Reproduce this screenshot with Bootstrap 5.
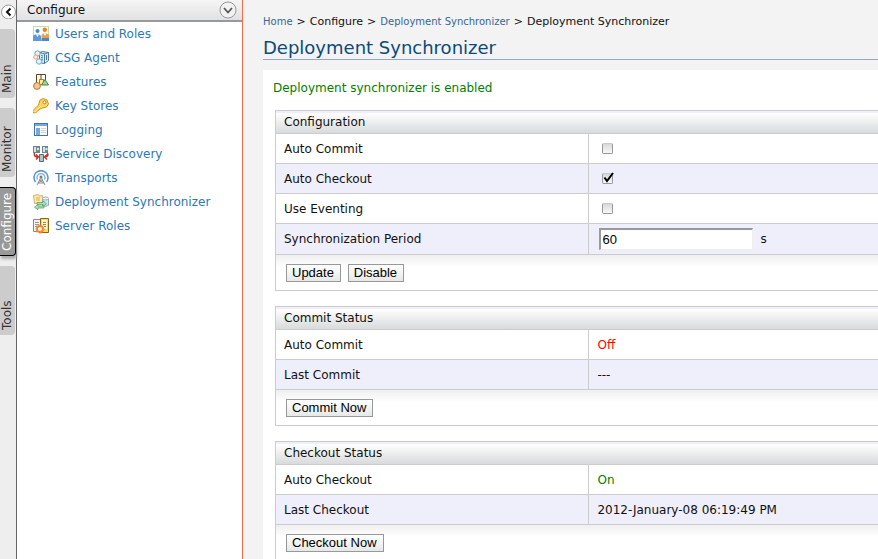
<!DOCTYPE html>
<html lang="en">
<head>
<meta charset="utf-8">
<meta name="viewport" content="width=device-width, initial-scale=1">
<title>Deployment Synchronizer</title>
<link href="https://cdn.jsdelivr.net/npm/bootstrap@5.3.0/dist/css/bootstrap.min.css" rel="stylesheet">
<style>
  body { font-family: "DejaVu Sans", Verdana, sans-serif; font-size: 12px; line-height: 16px; color: #111; background: #f3f3f3; }
  a { text-decoration: none; }
  .tab-strip { width: 17px; background: #eee; border-right: 1px solid #666; gap: 10px; }
  .collapse-btn { width: 17px; height: 19px; }
  .side-tab { width: 15px; height: 69px; padding: 5px 0 0; writing-mode: vertical-rl; transform: rotate(180deg); background: #ccc; color: #333; border-radius: 4px 0 0 4px; line-height: 15px; text-align: left; }
  .side-tab.current { width: 16px; background: #999; color: #fff; border: 1px solid #000; border-right: 0; padding-top: 4px; box-shadow: -1px -3px 3px #aaa; }
  .side-menu { width: 226px; background: #fff; border-right: 1px solid #f8694c; }
  .menu-head { height: 22px; padding: 0 5px 0 10px; background: linear-gradient(#f5f5f5, #e1e2e3); border-bottom: 2px solid #999; }
  .menu-link { height: 24px; padding-left: 16px; gap: 6px; color: #2a78b9; }
  .work-area { padding: 14px 0 0 20px; scrollbar-width: none; }
  .crumbs { font-size: 11px; height: 16px; --bs-breadcrumb-divider: ">"; }
  .crumbs a { font-size: 10px; color: #386698; }
  .crumbs .breadcrumb-item + .breadcrumb-item { padding-left: 4px; }
  .crumbs .breadcrumb-item + .breadcrumb-item::before { padding-right: 4px; color: #111; }
  .page-title { font-size: 18px; line-height: 23px; color: #0b4a7c; margin: 6px 0 10px; border-bottom: 1px solid #94a6cd; }
  .work-body { padding: 10px 0 14px 10px; }
  .status-note { color: #008000; margin-bottom: 14px; }
  .data-table { table-layout: fixed; border-collapse: separate; border-spacing: 0; margin: 0 0 15px 2px; width: calc(100% - 2px); border: 1px solid #ccc; border-right: 0; }
  .data-table th { height: 22px; padding: 0 8px 3px; font-weight: 400; border-top: 2px solid #efeefb; background: linear-gradient(#fff, #d8dadb); }
  .data-table td { height: 30px; padding: 0 8px; border-top: 1px solid #ccc; }
  .data-table td + td { border-left: 1px solid #ccc; }
  .data-table .shaded td { background: #efeefb; }
  .data-table .field-row td { height: 31px; }
  .label-col { width: 51.9%; }
  .data-table .actions td { height: 36px; padding: 0 10px; background: linear-gradient(#efefef, #fff 12px); }
  .plain-btn { font: 13px/16px "Liberation Sans", Arial, sans-serif; color: #000; padding: 0 6px 0 5px; border: 1px solid #999; background: linear-gradient(#fff, #e6e8e8); margin-right: 3px; }
  .tick { appearance: none; display: block; width: 11px; height: 11px; margin-left: 5px; border: 1px solid #999; border-top-color: #c8c8c8; border-radius: 2px; background: linear-gradient(#d8d8d8, #f8f8f8); }
  .tick-wrap { width: 24px; height: 14px; display: flex; align-items: center; position: relative; }
  .tick-mark { position: absolute; left: 5px; top: 0; pointer-events: none; display: none; }
  .tick:checked + .tick-mark { display: block; }
  .seconds { width: 154px; height: 22px; padding: 1px; margin-left: 2px; border: 2px solid #999; border-right: 1px solid #eee; border-bottom: 1px solid #eee; background: #fff; font: 13px "Liberation Sans", Arial, sans-serif; color: #000; }
  .unit { margin-left: 7px; }
  .state-off { color: #f00; }
  .state-on { color: #008000; }
</style>
<script src="https://cdn.jsdelivr.net/npm/bootstrap@5.3.0/dist/js/bootstrap.bundle.min.js"></script>
</head>
<body>
<div class="d-flex vh-100 overflow-hidden">
  <nav class="tab-strip d-flex flex-column flex-shrink-0" aria-label="Sections">
    <button class="collapse-btn border-0 bg-transparent p-0 d-flex" aria-label="Collapse menu">
      <svg width="16" height="19" viewBox="0 0 16 19"><circle cx="8.5" cy="12" r="7" fill="#fff" stroke="#999"/><path d="M10.500 8.500 7 12l3.500 3.500" fill="none" stroke="#111" stroke-width="2"/></svg>
    </button>
    <button class="side-tab border-0">Main</button>
    <button class="side-tab border-0">Monitor</button>
    <button class="side-tab current">Configure</button>
    <button class="side-tab border-0">Tools</button>
  </nav>

  <aside class="side-menu flex-shrink-0">
    <div class="menu-head d-flex align-items-center justify-content-between">
      <span>Configure</span>
      <button class="border-0 bg-transparent p-0 d-flex" aria-label="Toggle menu">
        <svg width="18" height="18" viewBox="0 0 18 18"><circle cx="9" cy="9" r="8" fill="#f2f2f2" stroke="#999"/><path d="m5 7 4 4.500L13 7" fill="none" stroke="#555" stroke-width="1.800"/></svg>
      </button>
    </div>
    <ul class="list-unstyled mb-0">
      <li><a href="#" class="menu-link d-flex align-items-center">
        <svg width="16" height="16" viewBox="0 0 16 16"><rect x=".5" y=".5" width="15" height="14" fill="#fcfff4" stroke="#c3dcae"/><circle cx="4.500" cy="5" r="2" fill="#4189d0"/><circle cx="11.800" cy="3.800" r="2.200" fill="#ef8027"/><path d="M0 15v-4q0-2.500 2.500-2.500h3Q8 8.500 8 11v4z" fill="#5c9bd8"/><path d="M8.500 12v-2q0-2.500 2.500-2.500h2q3 0 3 2.500v2z" fill="#f39a4c"/><path d="M8.500 12H16v3H8.500z" fill="#4b86c6"/><path d="M3 8.500h3L4.500 11zM10.500 7.500h3L12 10z" fill="#fff"/></svg>
        Users and Roles</a></li>
      <li><a href="#" class="menu-link d-flex align-items-center">
        <svg width="16" height="16" viewBox="0 0 16 16"><path d="m6.500 2.500 3-1 6 1v8l-4 3-5-1z" fill="#dceaf2" stroke="#477ba2"/><path d="m6.500 2.500 5 1.500 4-1.500M11.500 4v9.500M8 5.500l2 .5M8 7.500l2 .5M8 9.500l2 .5M13.500 5v5" fill="none" stroke="#477ba2"/><circle cx="4.500" cy="3.500" r="2.600" fill="#e4f5fc" stroke="#61a4cd"/><circle cx="2.800" cy="7" r="2.100" fill="#fff1df" stroke="#e79f68"/><circle cx="6" cy="11.500" r="2.700" fill="#e1f2fa" stroke="#70acd0"/></svg>
        CSG Agent</a></li>
      <li><a href="#" class="menu-link d-flex align-items-center">
        <svg width="16" height="16" viewBox="0 0 16 16"><path d="M3.500 9V.5h9V7M8 .5V6" fill="none" stroke="#6c4309"/><path d="M6.500 5.500h4v5h-4z" fill="#ffe98b" stroke="#ab7b17"/><circle cx="4" cy="12" r="3.400" fill="#f7c78f" stroke="#b87836"/><path d="m12 5.500 3.500 5.500h-7z" fill="#a2d498" stroke="#468c45"/></svg>
        Features</a></li>
      <li><a href="#" class="menu-link d-flex align-items-center">
        <svg width="16" height="16" viewBox="0 0 16 16"><path d="m7 2 3-1.500 4 1.500 1.500 4-2 3-4 1-1.500 1-1-.5-1 1.500-1.500 1-1 1-1 1-3-.500V13l6-6z" fill="#ffd75e" stroke="#d49314"/><path d="m2 14 6-6" stroke="#fff0a0"/><circle cx="11.500" cy="4.300" r="1.500" fill="#fff" stroke="#bb7c13"/></svg>
        Key Stores</a></li>
      <li><a href="#" class="menu-link d-flex align-items-center">
        <svg width="16" height="16" viewBox="0 0 16 16"><rect x="1.500" y="1.500" width="13" height="12" fill="#fff" stroke="#3f73b5"/><path d="M2 2h12v2H2z" fill="#78a8de"/><path d="M3 6h4v7H3z" fill="#7ba8d6"/><path d="M8 6.500h5M8 8.500h5M8 10.500h5" stroke="#c3d6ec"/></svg>
        Logging</a></li>
      <li><a href="#" class="menu-link d-flex align-items-center">
        <svg width="16" height="16" viewBox="0 0 16 16"><path d="M0 0h7v7H0zM9 0h6v7H9z" fill="#718590"/><path d="M1 1h2v5H1zM10 1h2v5h-2z" fill="#d8e2e5"/><circle cx="5" cy="3" r="1.200" fill="#c4f0f6"/><circle cx="13.500" cy="3" r="1.200" fill="#c4f0f6"/><path d="M6.500 8.500h4v7h-4z" fill="#b2c4cf" stroke="#526b7a"/><path d="M1.500 7q-1 4 3.500 4M3 8.500 5.500 11 3 13.500M14.500 7q1.500 4-2.500 4M14 8.500 11.500 11l2.500 2.500" fill="none" stroke="#c42d22" stroke-width="1.400"/></svg>
        Service Discovery</a></li>
      <li><a href="#" class="menu-link d-flex align-items-center">
        <svg width="16" height="16" viewBox="0 0 16 16"><path d="M2.500 12a7 7 0 1 1 11 0" fill="none" stroke="#5792d3" stroke-width="1.500"/><path d="M4.500 9.500a4 4 0 1 1 7 0" fill="none" stroke="#79aee3" stroke-width="1.300"/><circle cx="8" cy="7" r="1.500" fill="#777"/><path d="m8 7-4 8M8 7l4 8M6.500 10h3M5 13l5-3M11 13l-5-3M5 13h6" fill="none" stroke="#82898e" stroke-width=".9"/></svg>
        Transports</a></li>
      <li><a href="#" class="menu-link d-flex align-items-center">
        <svg width="16" height="16" viewBox="0 0 16 16"><path d="m.5 1.500 5-1 1 1.500 3-.5v7l-8 1z" fill="#ffeaaa" stroke="#d3b26a"/><path d="M3 4h4M3 6h4" stroke="#d6af62"/><path d="M9.500 4.500v7q2.500 1.500 6 0v-7" fill="#d7e7f2" stroke="#91adbf"/><ellipse cx="12.500" cy="4.500" rx="3" ry="1.500" fill="#f1f8fc" stroke="#91adbf"/><path d="M4 8.500h6V6.800l3.500 3-3.500 2.700v-2H4z" fill="#b5e0b4" stroke="#4b9c5b" stroke-width=".7"/><path d="M11 12H5v-1.700l-3.500 2.900L5 15.700V14h6z" fill="#b5e0b4" stroke="#4b9c5b" stroke-width=".7"/></svg>
        Deployment Synchronizer</a></li>
      <li><a href="#" class="menu-link d-flex align-items-center">
        <svg width="16" height="16" viewBox="0 0 16 16"><path d="M.5 1.500h7v12h-7z" fill="#f3f3f3" stroke="#888"/><path d="M2 4.500h4M2 6.500h4M2 8.500h2" stroke="#999"/><path d="M7.500.5h8v14h-8z" fill="#ffdb55" stroke="#8b6414"/><path d="M9 2h5v9H9z" fill="#fff6cf"/><path d="M10 4.500h3M10 6.500h3M11 8.500h2" stroke="#a78335"/><circle cx="7" cy="11" r="3" fill="#fff4d4" stroke="#f58232" stroke-width="1.800"/><path d="M7 6.500v1.200M7 14.300v1.500M2.300 11h1.500M10.200 11h1.500M3.700 7.700l1 1M9.300 13.300l1 1M10.300 7.700l-1 1M4.700 13.300l-1 1" stroke="#f58232"/></svg>
        Server Roles</a></li>
    </ul>
  </aside>

  <main class="work-area flex-grow-1 overflow-auto">
    <nav aria-label="breadcrumb">
      <ol class="breadcrumb crumbs mb-0 flex-nowrap text-nowrap">
        <li class="breadcrumb-item"><a href="#">Home</a></li>
        <li class="breadcrumb-item">Configure</li>
        <li class="breadcrumb-item"><a href="#">Deployment Synchronizer</a></li>
        <li class="breadcrumb-item">Deployment Synchronizer</li>
      </ol>
    </nav>
    <h1 class="page-title fw-normal">Deployment Synchronizer</h1>

    <form class="work-body bg-white">
      <p class="status-note">Deployment synchronizer is enabled</p>

      <table class="data-table">
        <colgroup><col class="label-col"><col></colgroup>
        <thead><tr><th colspan="2">Configuration</th></tr></thead>
        <tbody>
          <tr><td><label for="autoCommit">Auto Commit</label></td><td><span class="tick-wrap"><input type="checkbox" class="tick" id="autoCommit"></span></td></tr>
          <tr class="shaded"><td><label for="autoCheckout">Auto Checkout</label></td><td><span class="tick-wrap"><input type="checkbox" class="tick" id="autoCheckout" checked><svg class="tick-mark" width="13" height="12" viewBox="0 0 13 12"><path d="m2.500 5.500 2.500 3.500L11 1" fill="none" stroke="#000" stroke-width="2"/></svg></span></td></tr>
          <tr><td><label for="useEventing">Use Eventing</label></td><td><span class="tick-wrap"><input type="checkbox" class="tick" id="useEventing"></span></td></tr>
          <tr class="shaded field-row"><td><label for="period">Synchronization Period</label></td><td><div class="d-flex align-items-center"><input type="text" class="seconds" id="period" value="60"><span class="unit">s</span></div></td></tr>
          <tr class="actions"><td colspan="2"><button type="button" class="plain-btn">Update</button> <button type="button" class="plain-btn">Disable</button></td></tr>
        </tbody>
      </table>

      <table class="data-table">
        <colgroup><col class="label-col"><col></colgroup>
        <thead><tr><th colspan="2">Commit Status</th></tr></thead>
        <tbody>
          <tr><td>Auto Commit</td><td><span class="state-off">Off</span></td></tr>
          <tr class="shaded"><td>Last Commit</td><td>---</td></tr>
          <tr class="actions"><td colspan="2"><button type="button" class="plain-btn">Commit Now</button></td></tr>
        </tbody>
      </table>

      <table class="data-table">
        <colgroup><col class="label-col"><col></colgroup>
        <thead><tr><th colspan="2">Checkout Status</th></tr></thead>
        <tbody>
          <tr><td>Auto Checkout</td><td><span class="state-on">On</span></td></tr>
          <tr class="shaded"><td>Last Checkout</td><td>2012-January-08 06:19:49 PM</td></tr>
          <tr class="actions"><td colspan="2"><button type="button" class="plain-btn">Checkout Now</button></td></tr>
        </tbody>
      </table>
    </form>
  </main>
</div>
</body>
</html>
